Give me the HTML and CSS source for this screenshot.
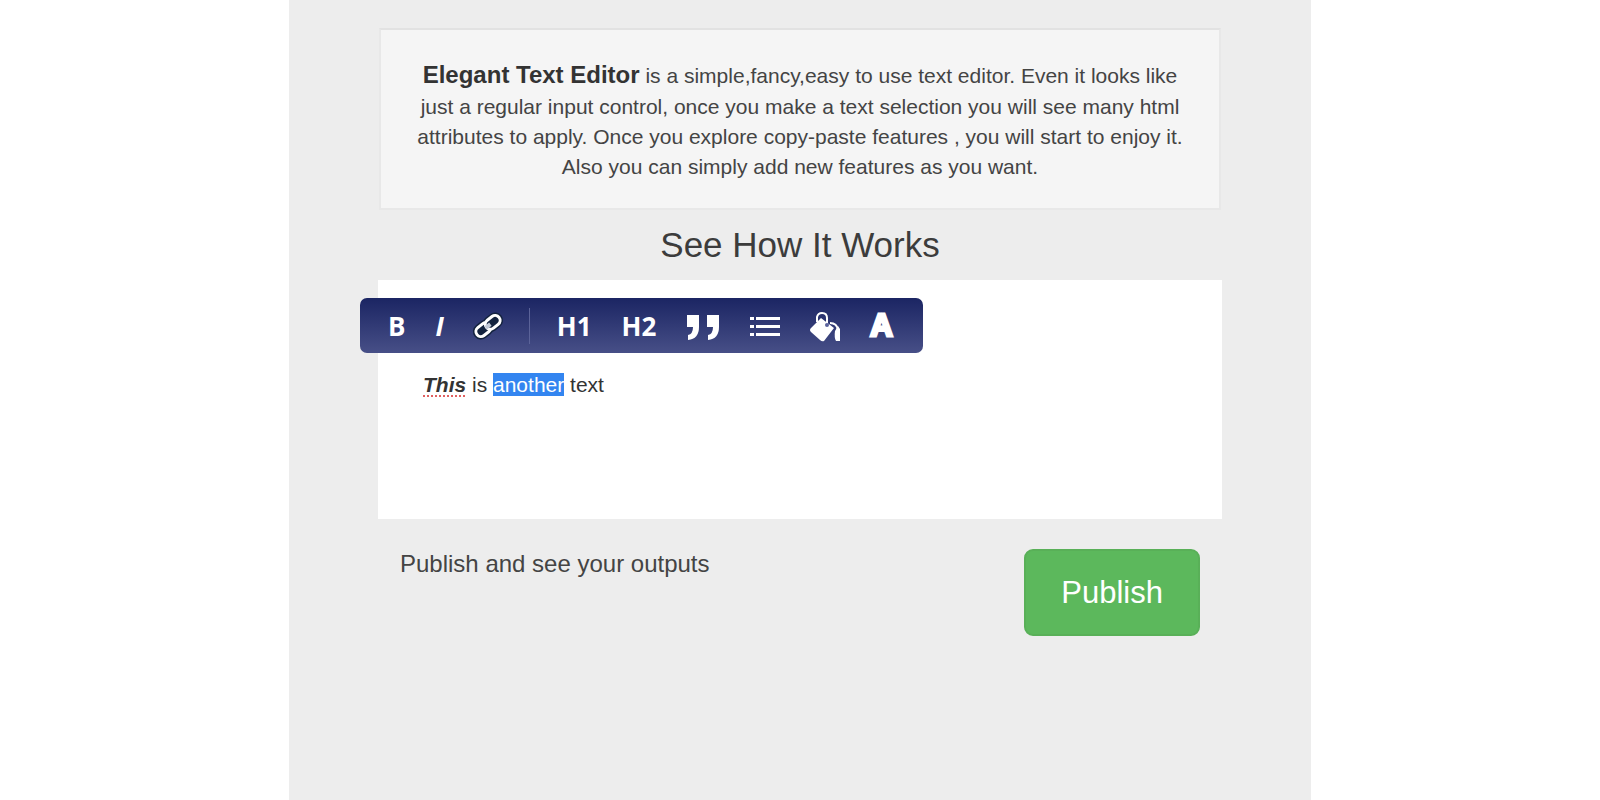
FILE: index.html
```html
<!doctype html>
<html lang="en">
<head>
	<meta charset="UTF-8">
	<title>Elegant Text Editor</title>
	<link rel="stylesheet" href="styles.css">
</head>
<body>
	<div class="container">
		<p class="intro"><strong>Elegant Text Editor</strong> is a simple,fancy,easy to use text editor. Even it looks like just a regular input control, once you make a text selection you will see many html attributes to apply. Once you explore copy-paste features , you will start to enjoy it. Also you can simply add new features as you want.</p>

		<h1 id="editor-title">See How It Works</h1>

		<div class="editor-wrap">
			<!-- floating toolbar, shown over the selection -->
			<div class="toolbar" role="toolbar" aria-label="Text format">
				<button type="button">B</button>
				<button type="button" class="italic">I</button>
				<button type="button" aria-label="Link">
					<svg width="28" height="26" viewBox="0 0 28 26" fill="#14233f">
						<g transform="rotate(-38 14 13)">
							<g stroke="#14233f" stroke-width="6">
								<rect x="0" y="8" width="16" height="10" rx="5"/>
								<rect x="12" y="8" width="16" height="10" rx="5"/>
							</g>
							<g stroke="#fff" stroke-width="3">
								<rect x="0" y="8" width="16" height="10" rx="5"/>
								<rect x="12" y="8" width="16" height="10" rx="5"/>
							</g>
							<path d="M11 13H17" stroke="#c3cad8" stroke-width="4"/>
						</g>
					</svg>
				</button>
				<span class="divider"></span>
				<button type="button">H1</button>
				<button type="button">H2</button>
				<button type="button" class="icon" aria-label="Quote">
					<svg width="34" height="26" viewBox="0 0 34 26" fill="#fff">
						<path d="M1 1H13V13Q13 25 2 26V21Q7 20 7 13H1Z"/>
						<path d="M21 1H33V13Q33 25 22 26V21Q27 20 27 13H21Z"/>
					</svg>
				</button>
				<button type="button" class="icon" aria-label="List">
					<svg width="30" height="22" viewBox="0 0 30 22" fill="#fff">
						<path d="M0 1H4V4H0ZM0 9H4V12H0ZM0 17H4V20H0ZM6 1H30V4H6ZM6 9H30V12H6ZM6 17H30V20H6Z"/>
					</svg>
				</button>
				<button type="button" class="icon" aria-label="Fill color">
					<svg width="30" height="30" viewBox="0 0 30 30" fill="none" stroke="#fff">
						<path d="M11 6L24 16L14 29Q12 30 10 28L1 20Q-1 18 1 16Z" fill="#fff" stroke="none"/>
						<path d="M7 10V5Q8 1 12 1Q17 1 17 6V12" stroke-width="2"/>
						<circle cx="17" cy="13" r="2" fill="#5a629c" stroke="none"/>
						<path d="M20 11Q27 11 28 18" stroke-width="2"/>
						<path d="M25 19Q24 26 26 29H30V17L28 14Z" fill="#fff" stroke="none"/>
					</svg>
				</button>
				<button type="button" class="color" aria-label="Text color">A</button>
			</div>
			<div class="editor" contenteditable="true" spellcheck="false" role="textbox" aria-labelledby="editor-title"><b class="misspelled">This</b> is <span class="selected">another</span> text</div>
		</div>

		<div class="footer">
			<p>Publish and see your outputs</p>
			<button type="button" class="publish">Publish</button>
		</div>
	</div>
</body>
</html>
```
FILE: styles.css
```css
*{
	box-sizing:border-box;
}
body{
	margin:0; background:#fff; color:#444; font-family:"Liberation Sans",Arial,sans-serif; font-size:21px; line-height:30px;
}
button{
	font-family:inherit; cursor:pointer;
}
.container{
	max-width:1022px; min-height:100vh; margin:0 auto; padding:28px 89px; background:#ededed;
}
.intro{
	margin:0 1px; padding:28px 28px 26px; background:#f5f5f5; border:2px solid #e8e8e8; border-top-color:#e2e2e2; text-align:center;
}
.intro strong{
	font-size:24px; line-height:34px; color:#333;
}
h1{
	margin:16px 0; font-size:35px; font-weight:normal; line-height:38px; color:#3c3c3c; text-align:center;
}

/* editor */
.editor-wrap{
	position:relative;
}
.editor{
	min-height:239px; padding:90px 45px 30px; background:#fff; outline:none; color:#333;
}
.misspelled{
	font-style:italic; text-decoration:underline dotted #e06060 2px; text-underline-offset:3px;
}
.selected{
	background:#3385f0; color:#fff;
}

/* toolbar */
.toolbar{
	position:absolute; top:18px; left:-18px; height:55px; padding:0 30px 0 28px; display:flex; align-items:center; gap:30px; border-radius:7px; background:linear-gradient(#1b2563,#474f87);
}
.toolbar button{
	display:flex; padding:0; border:0; background:none; color:#fff; font-family:"Open Sans",sans-serif; font-size:26px; font-weight:bold; line-height:30px;
}
.toolbar svg{
	overflow:visible;
}
.toolbar .italic{
	font-style:italic;
}
.toolbar .icon{
	padding-top:3px;
}
.toolbar .color{
	font-family:"Liberation Sans",Arial,sans-serif; font-size:31px; -webkit-text-stroke:3px #fff;
}
.divider{
	width:1px; height:36px; margin:0 -3px; background:#5b6399;
}

.footer{
	display:flex; justify-content:space-between; align-items:flex-start; padding:30px 22px;
}
.footer p{
	margin:0; font-size:24px;
}
.publish{
	padding:24px 35px; border:2px solid #59b058; border-radius:9px; background:#5cb85c; color:#fff; font-size:31px; line-height:35px;
}
```
